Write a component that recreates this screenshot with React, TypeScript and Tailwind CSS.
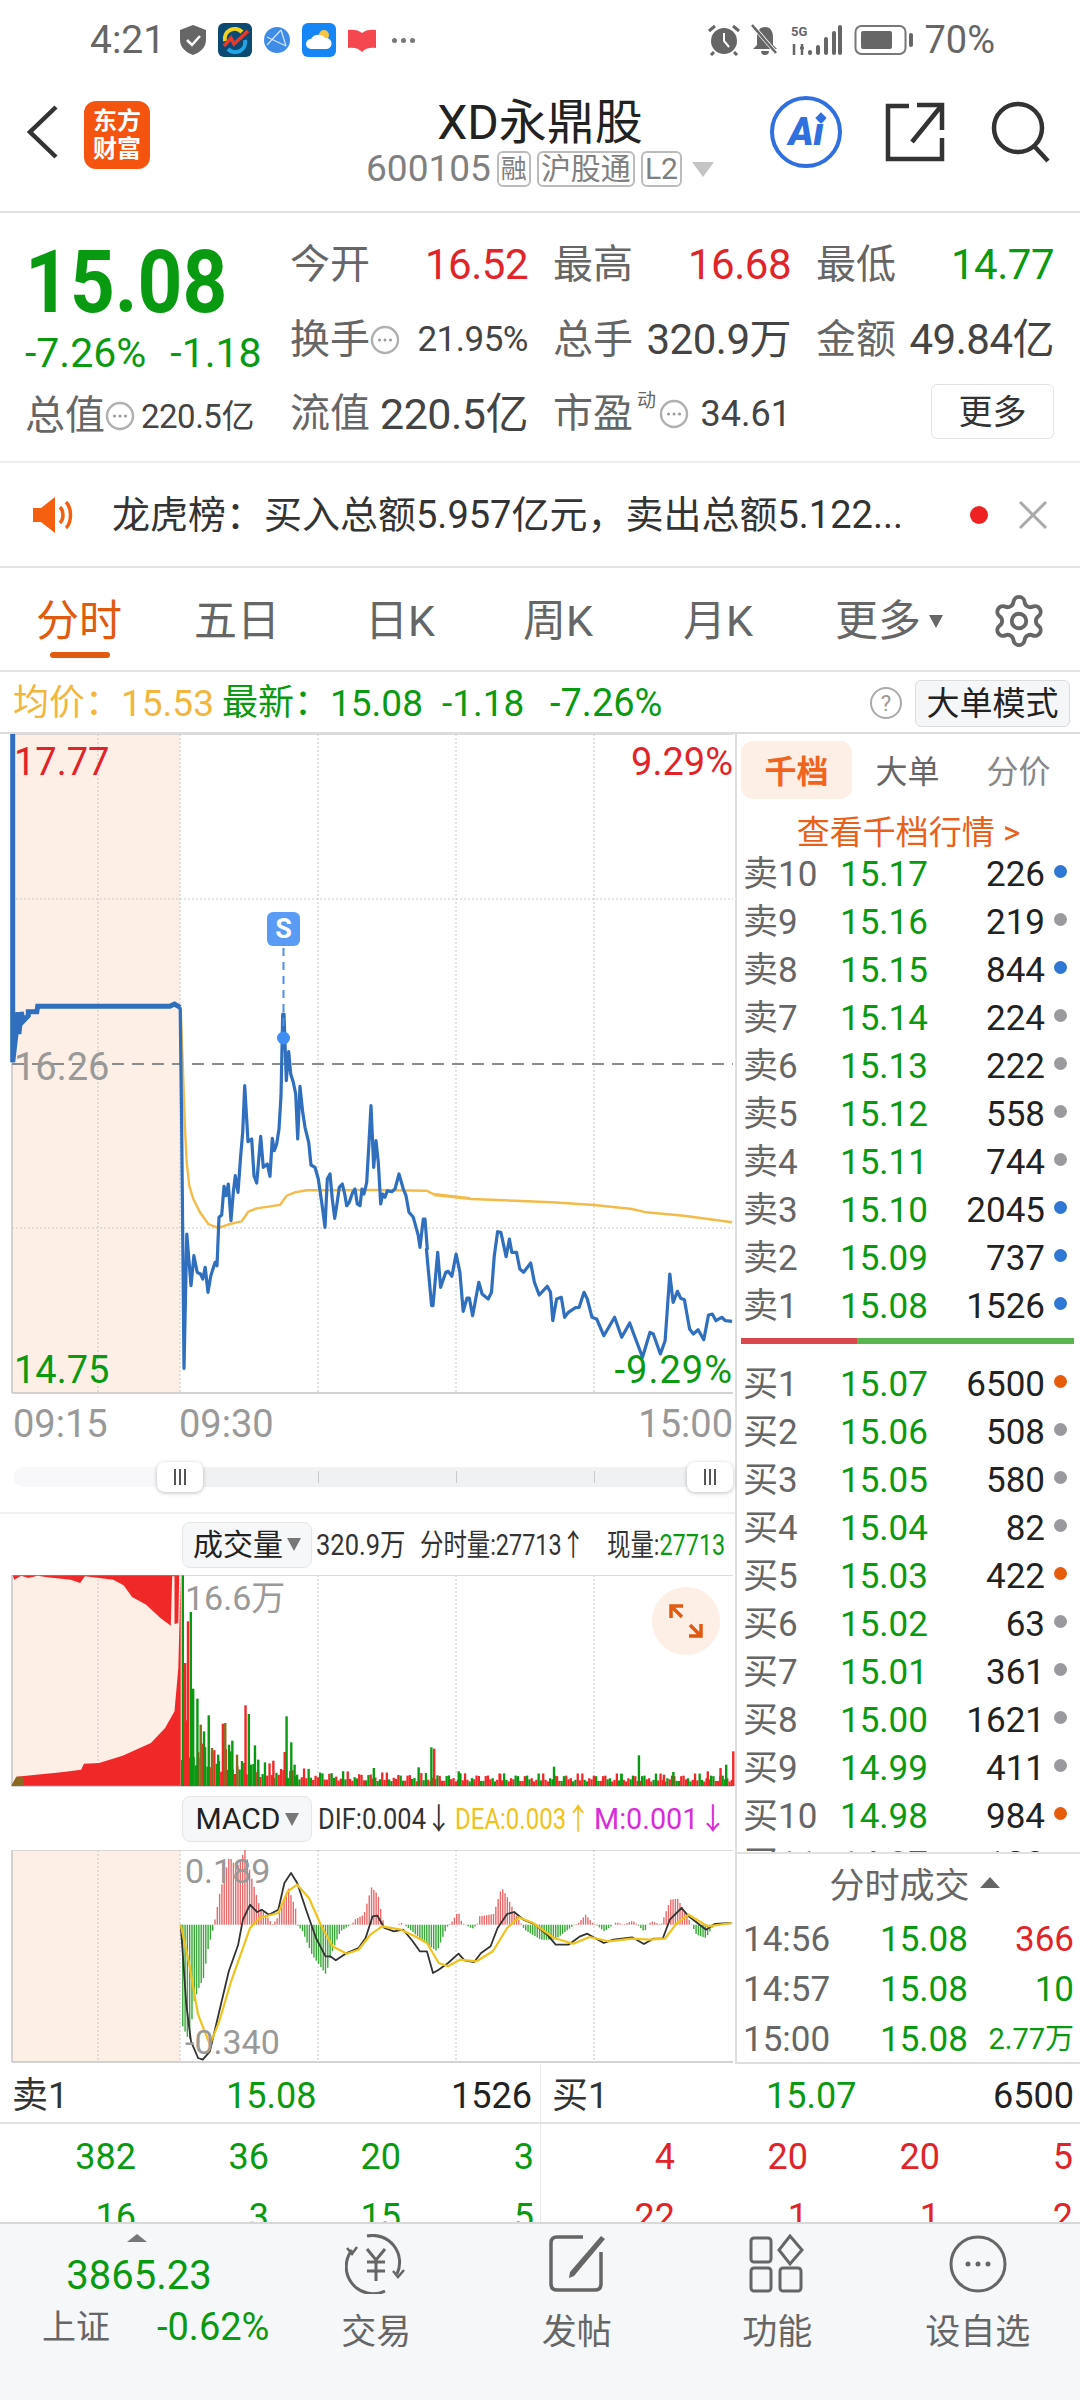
import { Settings } from 'lucide-react';

const GREEN = 'text-[#0a9a12]';
const RED = 'text-[#e0242a]';

type Pt = [number, number];

// points read from the chart, x in 1/2.12 px and y in 1/3 px
const fromWide = (pts: Pt[], top: number): Pt[] => pts.map(([x, y]) => [x / 2.12, top + y / 3]);
const fromFine = (pts: Pt[]): Pt[] => pts.map(([x, y]) => [170 + x / 3, 1030 + y / 3]);
const line = (pts: Pt[]) => pts.map(([x, y]) => `${x.toFixed(1)},${y.toFixed(1)}`).join(' ');

const preMarket = fromWide(
  [[27, 45], [27, 1030], [34, 945], [38, 880], [40, 945], [45, 880], [50, 905], [60, 890], [60, 878], [78, 878], [80, 862], [360, 862], [370, 855], [382, 865]],
  720,
);
const priceA = fromWide(
  [[382, 865], [385, 1200], [390, 1948], [396, 1545], [405, 1700], [411, 1610], [418, 1660], [425, 1665], [430, 1680], [435, 1645], [441, 1720], [447, 1670], [456, 1630], [460, 1640]],
  720,
);
const priceB = fromFine(
  [[143, 660], [147, 565], [155, 558], [162, 472], [168, 500], [175, 465], [183, 575], [190, 490], [196, 440], [204, 490], [212, 380], [218, 310], [224, 170], [234, 338], [245, 330], [252, 440], [260, 462], [272, 322], [280, 415], [292, 405], [300, 442], [307, 328], [313, 365], [320, 345], [327, 300], [333, 200], [338, -45], [342, -45], [349, 155], [356, 68], [362, 135], [370, 160], [377, 195], [383, 330], [390, 172], [398, 250], [405, 295], [416, 340], [423, 408], [435, 415], [445, 450], [455, 520], [465, 595], [472, 450], [480, 435], [487, 510], [494, 568], [500, 530], [508, 475], [517, 465], [524, 495], [530, 530], [538, 520], [548, 490], [555, 480], [562, 525], [570, 530], [576, 480], [582, 495], [590, 460], [597, 340], [603, 230], [611, 415], [618, 335], [625, 400], [632, 525], [638, 495], [645, 505], [652, 485], [665, 488], [675, 480], [687, 435], [700, 480], [708, 500], [717, 550], [730, 565], [745, 620], [750, 655], [760, 570], [765, 570], [772, 660]],
);
const priceC = fromWide(
  [[904, 420], [915, 590], [918, 590], [928, 430], [934, 535], [945, 490], [950, 487], [958, 502], [967, 435], [975, 490], [982, 607], [990, 567], [995, 567], [1002, 620], [1015, 520], [1022, 555], [1035, 570], [1042, 550], [1048, 440], [1055, 368], [1062, 370], [1073, 443], [1080, 390], [1085, 430], [1095, 430], [1102, 480], [1110, 490], [1125, 462], [1133, 520], [1143, 558], [1160, 532], [1167, 550], [1172, 635], [1180, 570], [1190, 565], [1197, 625], [1205, 610], [1220, 596], [1228, 595], [1238, 550], [1245, 570], [1255, 625], [1265, 630], [1280, 680], [1303, 625], [1318, 685], [1335, 642], [1345, 680], [1362, 745], [1378, 670], [1385, 675], [1400, 735], [1410, 695], [1420, 495], [1427, 580], [1436, 547], [1443, 568], [1451, 572], [1462, 660], [1470, 675], [1480, 662], [1492, 692], [1502, 618], [1510, 615], [1518, 635], [1530, 625], [1538, 635], [1552, 637]],
  1110,
);
const avgLine = [
  ...fromFine([[32, -60], [38, 100], [45, 300], [50, 400], [58, 470], [70, 510], [90, 550], [115, 585], [145, 597], [180, 585], [215, 577], [235, 548], [260, 538], [330, 528], [350, 500], [375, 490], [410, 484], [480, 484], [620, 483], [770, 485], [790, 495], [900, 508]]),
  ...fromWide([[920, 258], [1000, 270], [1170, 280], [1260, 288], [1340, 300], [1370, 310], [1450, 320], [1552, 340]], 1110),
];

const volSpikes: [number, number, string][] = [
  [385, 232, 'g'], [390, 495, 'r'], [396, 370, 'r'], [402, 342, 'g'], [407, 572, 'g'], [416, 602, 'g'], [423, 680, 'b'], [430, 700, 'g'], [440, 652, 'g'], [447, 750, 'b'], [460, 770, 'g'], [470, 677, 'r'], [475, 675, 'b'], [483, 740, 'g'], [490, 728, 'g'], [500, 770, 'b'], [518, 622, 'r'], [525, 648, 'g'], [538, 742, 'g'], [545, 785, 'g'], [577, 788, 'r'], [601, 762, 'r'], [605, 655, 'g'], [615, 733, 'g'], [622, 800, 'g'], [790, 810, 'g'], [885, 808, 'g'], [912, 748, 'g'], [918, 752, 'r'], [970, 820, 'g'], [1058, 828, 'r'], [1172, 806, 'g'], [1315, 828, 'g'], [1352, 772, 'g'], [1405, 830, 'r'], [1425, 822, 'g'], [1498, 820, 'r'], [1525, 810, 'r'], [1537, 800, 'g'], [1552, 760, 'r'],
];
const spikeColor: Record<string, string> = { g: '#0a9a12', r: '#f02828', b: '#8a6a1e' };

const volNoise = Array.from({ length: 240 }, (_, i) => {
  const x = 181 + i * 2.3;
  const env = 62 * Math.exp(-(x - 180) / 50) + 13;
  const h = env * (0.35 + (0.65 * ((i * i * 13 + i * 7) % 17)) / 16);
  return { x, h, green: (i * 11) % 5 < 2 };
});

const macdEnv: Pt[] = [[385, 712], [400, 760], [410, 640], [420, 600], [430, 570], [440, 480], [450, 425], [452, 410], [455, 390], [465, 310], [485, 205], [500, 240], [518, 185], [530, 260], [540, 310], [550, 360], [570, 395], [575, 410], [585, 395], [600, 340], [610, 300], [625, 360], [628, 410], [640, 430], [660, 500], [690, 560], [700, 500], [720, 430], [740, 412], [745, 410], [750, 395], [770, 380], [786, 298], [800, 320], [810, 395], [815, 410], [840, 410], [850, 405], [860, 415], [880, 440], [905, 470], [925, 490], [945, 420], [950, 410], [955, 405], [970, 370], [978, 405], [985, 410], [1000, 422], [1010, 410], [1015, 385], [1045, 378], [1062, 298], [1075, 330], [1090, 375], [1105, 410], [1110, 425], [1145, 455], [1175, 455], [1215, 412], [1225, 405], [1240, 380], [1255, 405], [1262, 410], [1280, 430], [1297, 412], [1305, 402], [1320, 410], [1340, 398], [1350, 410], [1365, 432], [1372, 410], [1380, 400], [1400, 410], [1420, 335], [1435, 332], [1450, 370], [1465, 410], [1475, 440], [1495, 450], [1510, 415], [1520, 410]];

const envAt = (x: number) => {
  for (let i = 1; i < macdEnv.length; i++) {
    const [x0, y0] = macdEnv[i - 1];
    const [x1, y1] = macdEnv[i];
    if (x <= x1) return y0 + ((y1 - y0) * (x - x0)) / (x1 - x0);
  }
  return 410;
};
const macdBars = Array.from({ length: 232 }, (_, i) => {
  const X = 386 + i * 4.88;
  return { x: X / 2.12, v: envAt(X) };
});

const dif = fromWide([[383, 410], [395, 650], [405, 760], [420, 810], [430, 815], [445, 790], [465, 670], [485, 550], [505, 470], [515, 395], [530, 350], [545, 372], [555, 365], [570, 380], [590, 365], [603, 285], [617, 255], [630, 285], [650, 370], [670, 450], [690, 505], [700, 505], [712, 517], [735, 495], [760, 480], [775, 450], [790, 385], [800, 383], [815, 420], [835, 430], [855, 425], [875, 460], [890, 490], [905, 490], [918, 555], [930, 545], [950, 525], [972, 497], [985, 517], [1005, 522], [1020, 495], [1040, 475], [1055, 420], [1075, 378], [1090, 372], [1110, 395], [1135, 410], [1160, 440], [1178, 470], [1205, 470], [1230, 445], [1245, 437], [1280, 465], [1300, 455], [1340, 448], [1365, 468], [1385, 452], [1405, 452], [1420, 395], [1445, 360], [1460, 385], [1497, 425], [1515, 408], [1552, 405]], 1790);
const dea = fromWide([[383, 410], [400, 520], [420, 680], [445, 770], [465, 700], [490, 580], [510, 500], [530, 420], [550, 390], [590, 375], [610, 310], [630, 290], [655, 330], [680, 410], [705, 475], [735, 497], [760, 485], [785, 440], [810, 415], [850, 425], [880, 445], [905, 465], [930, 525], [950, 535], [975, 515], [1010, 520], [1045, 490], [1075, 420], [1100, 388], [1130, 405], [1175, 450], [1215, 467], [1250, 447], [1290, 460], [1340, 452], [1375, 455], [1410, 452], [1435, 405], [1460, 380], [1500, 415], [1552, 405]], 1790);

const sells: [string, string, string, string][] = [
  ['卖10', '15.17', '226', 'b'], ['卖9', '15.16', '219', 'g'], ['卖8', '15.15', '844', 'b'], ['卖7', '15.14', '224', 'g'], ['卖6', '15.13', '222', 'g'],
  ['卖5', '15.12', '558', 'g'], ['卖4', '15.11', '744', 'g'], ['卖3', '15.10', '2045', 'b'], ['卖2', '15.09', '737', 'b'], ['卖1', '15.08', '1526', 'b'],
];
const buys: [string, string, string, string][] = [
  ['买1', '15.07', '6500', 'o'], ['买2', '15.06', '508', 'g'], ['买3', '15.05', '580', 'g'], ['买4', '15.04', '82', 'g'], ['买5', '15.03', '422', 'o'],
  ['买6', '15.02', '63', 'g'], ['买7', '15.01', '361', 'g'], ['买8', '15.00', '1621', 'g'], ['买9', '14.99', '411', 'g'], ['买10', '14.98', '984', 'o'],
];

function Dots() {
  return (
    <svg width="30" height="30" viewBox="0 0 30 30" className="shrink-0">
      <circle cx="15" cy="15" r="13" fill="none" stroke="#b0b0b0" strokeWidth="2.4" />
      <circle cx="9.5" cy="15" r="1.5" fill="#999" />
      <circle cx="15" cy="15" r="1.5" fill="#999" />
      <circle cx="20.5" cy="15" r="1.5" fill="#999" />
    </svg>
  );
}

function BookRow({ label, price, vol, dot }: { label: string; price: string; vol: string; dot: string }) {
  const dotColor = dot === 'b' ? 'bg-[#2f78d6]' : dot === 'o' ? 'bg-[#e85c0d]' : 'bg-[#9a9a9e]';
  return (
    <div className="flex h-[48px] shrink-0 items-center pt-[5px] text-[35px] leading-none">
      <span className="w-[99px] pl-[2px] text-[#666] whitespace-nowrap">{label}</span>
      <span className={`w-[90px] ${GREEN}`}>{price}</span>
      <span className="w-[115px] text-right text-[#222]">{vol}</span>
      <span className={`ml-[9px] mb-[6px] h-[13px] w-[13px] rounded-full ${dotColor}`} />
    </div>
  );
}

function Stat({ label, value }: { label: React.ReactNode; value: React.ReactNode }) {
  return (
    <div className="flex w-[238px] items-center justify-between whitespace-nowrap">
      <div className="flex items-center text-[40px] leading-none text-[#666]">{label}</div>
      {value}
    </div>
  );
}

function Grid({ top, h }: { top: number; h: number }) {
  return (
    <>
      <rect x="12" y={top} width="168" height={h} fill="#fdeee6" />
      {[98, 180, 318, 456, 594].map((x) => (
        <line key={x} x1={x} x2={x} y1={top} y2={top + h} stroke="#c8c8c8" strokeWidth="1" strokeDasharray="2 2" />
      ))}
      <line x1="12" x2="12" y1={top} y2={top + h} stroke="#c4c4c4" strokeWidth="1.5" />
      <line x1="12" x2="733" y1={top} y2={top} stroke="#d0d0d0" strokeWidth="1.5" />
      <line x1="12" x2="733" y1={top + h} y2={top + h} stroke="#c4c4c4" strokeWidth="1.5" />
    </>
  );
}

function Handle({ left }: { left: string }) {
  return (
    <div className={`absolute top-[-5px] flex h-[30px] w-[46px] items-center justify-center gap-[3px] rounded-lg bg-white shadow-[0_1px_4px_rgba(0,0,0,0.25)] ${left}`}>
      <span className="h-[16px] w-[2px] bg-[#555]" />
      <span className="h-[16px] w-[2px] bg-[#555]" />
      <span className="h-[16px] w-[2px] bg-[#555]" />
    </div>
  );
}

function Caret() {
  return <span className="ml-[4px] h-0 w-0 border-x-[7px] border-t-[13px] border-x-transparent border-t-[#777]" />;
}

export default function App() {
  return (
    <div className="flex h-[2400px] w-[1080px] flex-col overflow-hidden bg-white font-[Roboto,'Noto_Sans_CJK_SC',sans-serif]">
      {/* status bar */}
      <div className="flex h-[75px] shrink-0 items-center justify-between pl-[90px] pr-[85px] pt-[5px] text-[#666]">
        <div className="flex items-center">
          <span className="w-[89px] text-[39px] leading-none">4:21</span>
          <svg width="28" height="32" viewBox="0 0 28 32" className="mr-[11px]">
            <path d="M14 1 L27 6 V16 C27 24 20 29 14 31 C8 29 1 24 1 16 V6 Z" fill="#666" />
            <path d="M8 16 L13 21 L21 12" fill="none" stroke="#fff" strokeWidth="2.5" />
          </svg>
          <svg width="34" height="34" viewBox="0 0 34 34" className="mr-[12px]">
            <rect width="34" height="34" rx="6" fill="#0d4a73" />
            <path d="M7 18 A10 10 0 0 1 24 9" fill="none" stroke="#f4d31e" strokeWidth="4" />
            <path d="M27 17 A10 10 0 0 1 10 26" fill="none" stroke="#22a6e8" strokeWidth="4" />
            <path d="M6 23 L13 15 L16 21 L30 8" fill="none" stroke="#e8392a" strokeWidth="3.5" />
          </svg>
          <svg width="26" height="26" viewBox="0 0 26 26" className="mr-[12px]">
            <circle cx="13" cy="13" r="13" fill="#3f8be8" />
            <path d="M3 18 L17 3 M3 10 L22 19 M17 3 L22 19" fill="none" stroke="#d6e7fc" strokeWidth="1.2" />
          </svg>
          <svg width="34" height="34" viewBox="0 0 34 34" className="mr-[11px]">
            <rect width="34" height="34" rx="6" fill="#1685f5" />
            <circle cx="22" cy="12" r="5" fill="#f6c344" />
            <path d="M9 26 a5 5 0 0 1 0 -10 a8 7 0 0 1 14 -1 a5.5 5.5 0 0 1 2 11 Z" fill="#fff" />
          </svg>
          <svg width="30" height="24" viewBox="0 0 30 24" className="mr-[15px]">
            <path d="M1 2 C6 1 12 2 15 5 C18 2 24 1 29 2 V20 C24 19 18 20 15 24 C12 20 6 19 1 20 Z" fill="#f4474f" />
          </svg>
          <span className="flex gap-[4px]">
            <span className="h-[5px] w-[5px] rounded-full bg-[#777]" />
            <span className="h-[5px] w-[5px] rounded-full bg-[#777]" />
            <span className="h-[5px] w-[5px] rounded-full bg-[#777]" />
          </span>
        </div>
        <div className="flex items-center">
          <svg width="34" height="32" viewBox="0 0 34 32" className="mr-[10px]">
            <circle cx="17" cy="17" r="13" fill="#666" />
            <path d="M17 9 V17 L22 23" fill="none" stroke="#fff" strokeWidth="2" />
            <path d="M2 7 L8 2 M32 7 L26 2 M7 28 L4 31 M27 28 L30 31" stroke="#666" strokeWidth="3" />
          </svg>
          <svg width="28" height="32" viewBox="0 0 28 32" className="mr-[12px]">
            <path d="M14 3 C8 3 6 8 6 13 V21 L2 25 H26 L22 21 V13 C22 8 20 3 14 3 Z M10 27 H18 C18 30 16 31 14 31 C12 31 10 30 10 27 Z" fill="#666" />
            <path d="M2 2 L26 30" stroke="#fff" strokeWidth="4" />
            <path d="M1 1 L25 29" stroke="#666" strokeWidth="2.5" />
          </svg>
          <svg width="52" height="32" viewBox="0 0 52 32" className="mr-[11px]">
            <text x="0" y="12" fontSize="13" fontWeight="700" fill="#666">5G</text>
            <path d="M3 20 V31 M11 20 V31 M9 24 L13 24" stroke="#666" strokeWidth="2.5" />
            <rect x="17" y="26" width="4" height="5" rx="2" fill="#666" />
            <rect x="25" y="21" width="4" height="10" rx="2" fill="#666" />
            <rect x="33" y="13" width="4" height="18" rx="2" fill="#666" />
            <rect x="41" y="7" width="4" height="24" rx="2" fill="#666" />
            <rect x="47" y="1" width="4" height="30" rx="2" fill="#666" />
          </svg>
          <svg width="60" height="32" viewBox="0 0 60 32" className="mr-[10px]">
            <rect x="1.5" y="2" width="50" height="28" rx="6" fill="none" stroke="#777" strokeWidth="2" />
            <rect x="7" y="7" width="31" height="18" rx="2" fill="#666" />
            <rect x="55" y="9" width="4" height="14" rx="2" fill="#666" />
          </svg>
          <span className="text-[38px] leading-none">70%</span>
        </div>
      </div>

      {/* header */}
      <div className="relative flex h-[138px] shrink-0 items-center border-b-2 border-[#e0e0e0]">
        <svg width="34" height="56" viewBox="0 0 34 56" className="ml-[26px] mb-[22px]">
          <path d="M30 3 L4 28 L30 53" fill="none" stroke="#333" strokeWidth="4.5" />
        </svg>
        <div className="ml-[24px] mb-[16px] flex h-[68px] w-[66px] items-center justify-center rounded-xl bg-[#f4540f] text-center text-[24px] font-bold leading-[28px] text-white">
          东方
          <br />
          财富
        </div>
        <div className="absolute left-[330px] top-0 flex w-[420px] flex-col items-center">
          <span className="mt-[20px] text-[48px] leading-[56px] text-[#222]">XD永鼎股</span>
          <div className="mt-[-2px] flex items-center gap-[6px] text-[#808080]">
            <span className="text-[37px] leading-[40px]">600105</span>
            <span className="rounded-md border-2 border-[#bbb] px-[2px] text-[26px] leading-[32px]">融</span>
            <span className="rounded-md border-2 border-[#bbb] px-[2px] text-[30px] leading-[32px]">沪股通</span>
            <span className="rounded-md border-2 border-[#bbb] px-[2px] text-[30px] leading-[32px]">L2</span>
            <span className="ml-[4px] h-0 w-0 border-x-[11px] border-t-[15px] border-x-transparent border-t-[#c4c4c4]" />
          </div>
        </div>
        <div className="ml-auto mb-[22px] flex items-center pr-[29px]">
          <div className="relative flex h-[72px] w-[72px] items-center justify-center rounded-full border-[4px] border-[#2f6fe0] text-[38px] font-black italic leading-none text-[#2f6fe0]">
            Ai
            <span className="absolute right-[13px] top-[14px] h-[8px] w-[8px] rotate-45 bg-[#2f6fe0]" />
          </div>
          <svg width="60" height="60" viewBox="0 0 60 60" className="ml-[43px]">
            <path d="M24 4 H3 V57 H57 V36 M57 28 V3 H32 M57 3 L27 40" fill="none" stroke="#333" strokeWidth="4.5" />
          </svg>
          <svg width="60" height="62" viewBox="0 0 60 62" className="ml-[46px]">
            <circle cx="27" cy="27" r="24" fill="none" stroke="#333" strokeWidth="4.5" />
            <path d="M44 46 L57 60" stroke="#333" strokeWidth="4.5" />
          </svg>
        </div>
      </div>

      {/* quote */}
      <div className="flex h-[250px] shrink-0 border-b-2 border-[#eeeeee]">
        <div className="w-[290px] shrink-0 pl-[25px]">
          <div className={`mt-[25px] origin-left scale-x-[0.89] text-[88px] font-bold leading-[88px] ${GREEN}`}>15.08</div>
          <div className={`mt-[3px] flex items-center gap-[24px] text-[41px] leading-[48px] ${GREEN}`}>
            <span>-7.26%</span>
            <span>-1.18</span>
          </div>
          <div className="mt-[15px] flex items-center">
            <span className="text-[40px] leading-[48px] text-[#666]">总值</span>
            <Dots />
            <span className="ml-[6px] whitespace-nowrap text-[33px] tracking-[-0.5px] leading-none text-[#444]">220.5亿</span>
          </div>
        </div>
        <div className="flex flex-col">
          <div className="mt-[28px] flex gap-[25px]">
            <Stat label="今开" value={<span className={`text-[42px] tracking-[-0.5px] leading-[48px] ${RED}`}>16.52</span>} />
            <Stat label="最高" value={<span className={`text-[42px] tracking-[-0.5px] leading-[48px] ${RED}`}>16.68</span>} />
            <Stat label="最低" value={<span className={`text-[42px] tracking-[-0.5px] leading-[48px] ${GREEN}`}>14.77</span>} />
          </div>
          <div className="mt-[27px] flex gap-[25px] text-[#444]">
            <Stat label={<>换手<Dots /></>} value={<span className="text-[35px] tracking-[-0.5px] leading-[48px]">21.95%</span>} />
            <Stat label="总手" value={<span className="text-[42px] tracking-[-0.5px] leading-[48px]">320.9万</span>} />
            <Stat label="金额" value={<span className="text-[42px] tracking-[-0.5px] leading-[48px]">49.84亿</span>} />
          </div>
          <div className="mt-[24px] flex gap-[25px] text-[#444]">
            <Stat label="流值" value={<span className="text-[43px] tracking-[-0.5px] leading-[48px]">220.5亿</span>} />
            <Stat
              label={
                <>
                  市盈
                  <span className="mb-[26px] ml-[4px] mr-[3px] text-[19px] leading-none">动</span>
                  <Dots />
                </>
              }
              value={<span className="text-[36px] leading-[48px]">34.61</span>}
            />
            <div className="flex w-[238px] justify-end">
              <div className="mt-[-4px] flex h-[55px] w-[123px] items-center justify-center rounded-md border border-[#e3e3e3] text-[34px] leading-none text-[#333]">
                更多
              </div>
            </div>
          </div>
        </div>
      </div>

      {/* notice */}
      <div className="flex h-[105px] shrink-0 items-center border-b-2 border-[#e4e4e4]">
        <svg width="46" height="38" viewBox="0 0 46 38" className="ml-[33px] mr-[33px]">
          <path d="M0 12 H8 L22 1 V37 L8 26 H0 Z" fill="#f4600f" />
          <path d="M27 11 C31 15 31 23 27 27 M33 6 C39 12 39 26 33 32" fill="none" stroke="#f4600f" strokeWidth="3.5" />
        </svg>
        <span className="w-[830px] whitespace-nowrap text-[38px] leading-none text-[#333]">龙虎榜：买入总额5.957亿元，卖出总额5.122...</span>
        <span className="ml-[28px] h-[18px] w-[18px] rounded-full bg-[#ee2222]" />
        <svg width="30" height="30" viewBox="0 0 30 30" className="ml-[30px]">
          <path d="M2 2 L28 28 M28 2 L2 28" stroke="#aaa" strokeWidth="3" />
        </svg>
      </div>

      {/* tabs */}
      <div className="flex h-[104px] shrink-0 items-center border-b-2 border-[#e4e4e4] pt-[4px] text-[43px] leading-none text-[#666]">
        <div className="relative flex w-[158px] justify-center text-[#e05a10]">
          分时
          <span className="absolute left-[50px] top-[52px] h-[6px] w-[60px] rounded-full bg-[#e05a10]" />
        </div>
        <div className="flex w-[158px] justify-center">五日</div>
        <div className="flex w-[168px] justify-center">日K</div>
        <div className="flex w-[148px] justify-center">周K</div>
        <div className="flex w-[172px] justify-center">月K</div>
        <div className="flex w-[170px] items-center justify-center">
          更多
          <span className="ml-[8px] h-0 w-0 border-x-[7px] border-t-[13px] border-x-transparent border-t-[#666]" />
        </div>
        <Settings size={58} strokeWidth={1.6} color="#666" className="ml-[16px]" />
      </div>

      {/* price summary */}
      <div className="flex h-[62px] shrink-0 items-center whitespace-nowrap border-b-2 border-[#dcdcdc] pl-[13px] pt-[2px] text-[37px] leading-none">
        <span className="w-[108px] shrink-0 text-[36px] text-[#f3b63c]">均价：</span>
        <span className="w-[101px] shrink-0 text-[#f3b63c]">15.53</span>
        <span className={`w-[108px] shrink-0 text-[36px] ${GREEN}`}>最新：</span>
        <span className={`w-[112px] shrink-0 ${GREEN}`}>15.08</span>
        <span className={`w-[108px] shrink-0 ${GREEN}`}>-1.18</span>
        <span className={`text-[38px] ${GREEN}`}>-7.26%</span>
        <svg width="34" height="34" viewBox="0 0 34 34" className="ml-auto">
          <circle cx="17" cy="17" r="15" fill="none" stroke="#aaa" strokeWidth="2" />
          <text x="17" y="25" textAnchor="middle" fontSize="22" fill="#999">?</text>
        </svg>
        <div className="ml-[12px] mr-[10px] flex h-[47px] w-[155px] items-center justify-center rounded-md border border-[#dcdcdc] bg-[#f5f6f8] text-[33px] text-[#222]">
          大单模式
        </div>
      </div>

      <div className="flex h-[1330px] shrink-0">
        {/* left charts */}
        <div className="w-[735px] shrink-0">
          <div className="relative h-[660px]">
            <svg width="735" height="660" viewBox="0 735 735 660" className="block">
              <Grid top={735} h={659} />
              <line x1="12" x2="733" y1="900" y2="900" stroke="#c8c8c8" strokeDasharray="2 2" />
              <line x1="12" x2="733" y1="1229" y2="1229" stroke="#c8c8c8" strokeDasharray="2 2" />
              <line x1="12" x2="733" y1="1065" y2="1065" stroke="#8c8c8c" strokeWidth="2" strokeDasharray="12 8" />
              <polyline points={line(preMarket)} fill="none" stroke="#2f6fbd" strokeWidth="5" />
              <polyline points={line(avgLine)} fill="none" stroke="#f2bb4a" strokeWidth="2.4" />
              <polyline points={line([...priceA, ...priceB, ...priceC])} fill="none" stroke="#2f6fbd" strokeWidth="3.2" strokeLinejoin="round" />
              <line x1="283.5" x2="283.5" y1="949" y2="1032" stroke="#4a90e8" strokeWidth="2" strokeDasharray="8 6" />
              <circle cx="283.5" cy="1039" r="6.5" fill="#3f8ef5" />
              <rect x="267" y="913" width="33" height="34" rx="6" fill="#5a9cf5" />
              <text x="283.5" y="939" textAnchor="middle" fontSize="27" fontWeight="700" fill="#fff">S</text>
            </svg>
            <span className={`absolute left-[14px] top-[6px] text-[38px] leading-[44px] ${RED}`}>17.77</span>
            <span className={`absolute right-[2px] top-[6px] text-[38px] leading-[44px] ${RED}`}>9.29%</span>
            <span className="absolute left-[14px] top-[311px] text-[38px] leading-[44px] text-[#999]">16.26</span>
            <span className={`absolute left-[14px] top-[614px] text-[38px] leading-[44px] ${GREEN}`}>14.75</span>
            <span className={`absolute right-[2px] top-[614px] text-[38px] tracking-[1px] leading-[44px] ${GREEN}`}>-9.29%</span>
          </div>

          <div className="flex h-[60px] items-center justify-between pl-[13px] pr-[2px] text-[38px] leading-none text-[#999]">
            <span className="w-[166px]">09:15</span>
            <span className="mr-auto">09:30</span>
            <span>15:00</span>
          </div>

          <div className="h-[60px] border-b-2 border-[#f0f0f0] pl-[14px] pr-[2px] pt-[13px]">
            <div className="relative flex h-[20px] rounded-full bg-[#f0f1f3]">
              <div className="w-[150px] rounded-l-full bg-[#f8f8fa]" />
              <span className="absolute left-[304px] top-[4px] h-[12px] w-px bg-[#c8c8c8]" />
              <span className="absolute left-[442px] top-[4px] h-[12px] w-px bg-[#c8c8c8]" />
              <span className="absolute left-[580px] top-[4px] h-[12px] w-px bg-[#c8c8c8]" />
              <Handle left="left-[143px]" />
              <Handle left="right-0" />
            </div>
          </div>

          <div className="flex h-[61px] items-center whitespace-nowrap pl-[182px] text-[30px] leading-none text-[#333]">
            <div className="mr-[4px] flex h-[46px] w-[130px] items-center justify-center rounded-lg border border-[#e6e6e6] bg-[#f6f7f9] text-[#222]">
              成交量
              <Caret />
            </div>
            <span className="w-[104px] origin-left scale-x-[0.85]">320.9万</span>
            <span className="w-[187px] origin-left scale-x-[0.78]">分时量:27713↑</span>
            <span className="w-[116px] origin-left scale-x-[0.78]">
              现量:<span className={GREEN}>27713</span>
            </span>
          </div>

          <div className="relative h-[213px]">
            <svg width="735" height="213" viewBox="0 1577 735 213" className="block">
              <Grid top={1577} h={211} />
              <polygon
                points={line(fromWide([[24, 863], [35, 836], [130, 823], [172, 815], [178, 797], [210, 795], [260, 773], [320, 735], [350, 690], [370, 640], [378, 510], [383, 232], [383, 863]], 1500))}
                fill="#f02828"
              />
              <polygon points={line(fromWide([[24, 863], [35, 836], [50, 836], [50, 863]], 1500))} fill="#8a6a1e" />
              <polygon
                points={line(fromWide([[27, 232], [30, 245], [45, 233], [60, 240], [80, 233], [100, 238], [150, 245], [170, 255], [180, 235], [240, 245], [262, 262], [280, 297], [310, 320], [340, 360], [362, 383], [365, 235], [370, 235], [370, 378], [378, 375], [380, 232]], 1500))}
                fill="#f02828"
              />
              {volNoise.map((b) => (
                <rect key={b.x} x={b.x} y={1788 - b.h} width="2.3" height={b.h} fill={b.green ? '#0a9a12' : '#f02828'} />
              ))}
              {volSpikes.map(([X, v, c]) => (
                <rect key={X} x={X / 2.12} y={1500 + v / 3} width="2.4" height={1788 - (1500 + v / 3)} fill={spikeColor[c]} />
              ))}
            </svg>
            <span className="absolute left-[185px] top-[3px] text-[34px] leading-[40px] text-[#999]">16.6万</span>
            <div className="absolute left-[652px] top-[12px] flex h-[68px] w-[68px] items-center justify-center rounded-full bg-[#fdeee6]">
              <svg width="36" height="36" viewBox="0 0 36 36">
                <path d="M3 15 V3 H15 M3 3 L14 14 M33 21 V33 H21 M33 33 L22 22" fill="none" stroke="#e05a10" strokeWidth="3.5" />
              </svg>
            </div>
          </div>

          <div className="flex h-[62px] items-center whitespace-nowrap pl-[182px] text-[30px] leading-none">
            <div className="mr-[6px] flex h-[46px] w-[130px] items-center justify-center rounded-lg border border-[#e6e6e6] bg-[#f6f7f9] text-[#222]">
              MACD
              <Caret />
            </div>
            <span className="w-[137px] origin-left scale-x-[0.85] text-[#333]">DIF:0.004↓</span>
            <span className="w-[139px] origin-left scale-x-[0.8] text-[#efc31c]">DEA:0.003↑</span>
            <span className="origin-left scale-x-[0.96] text-[#d92cd9]">M:0.001↓</span>
          </div>

          <div className="relative h-[213px]">
            <svg width="735" height="213" viewBox="0 1852 735 213" className="block">
              <Grid top={1852} h={212} />
              {macdBars.map((b) => {
                const y = 1790 + b.v / 3;
                const up = b.v < 410;
                return (
                  <rect
                    key={b.x}
                    x={b.x}
                    y={up ? y : 1926.7}
                    width="1.4"
                    height={Math.abs(y - 1926.7)}
                    fill={up ? '#e86a6a' : '#3aa83a'}
                  />
                );
              })}
              <polyline points={line(dif)} fill="none" stroke="#333" strokeWidth="1.8" strokeLinejoin="round" />
              <polyline points={line(dea)} fill="none" stroke="#efc31c" strokeWidth="2.2" strokeLinejoin="round" />
            </svg>
            <span className="absolute left-[185px] top-[1px] text-[34px] leading-[40px] text-[#999]">0.189</span>
            <span className="absolute left-[185px] top-[172px] text-[34px] leading-[40px] text-[#999]">-0.340</span>
          </div>
        </div>

        {/* order book */}
        <div className="flex w-[345px] shrink-0 flex-col overflow-hidden border-l-2 border-b-2 border-[#dedede] pl-[4px]">
          <div className="mt-[7px] flex h-[58px] shrink-0 items-center text-[32px] leading-none text-[#666]">
            <div className="flex h-[58px] w-[111px] items-center justify-center rounded-xl bg-[#fdeee6] pt-[4px] font-bold text-[#f0641e]">千档</div>
            <div className="flex w-[111px] justify-center pt-[4px]">大单</div>
            <div className="flex w-[111px] justify-center pt-[4px] text-[#888]">分价</div>
          </div>
          <div className="flex h-[49px] shrink-0 items-center justify-center pr-[4px] pt-[18px] text-[33px] leading-none text-[#ea5f1a]">查看千档行情 &gt;</div>
          {sells.map(([l, p, v, d]) => (
            <BookRow key={l} label={l} price={p} vol={v} dot={d} />
          ))}
          <div className="mt-[10px] mb-[14px] flex h-[6px] w-[333px] shrink-0">
            <div className="w-[116px] bg-[#d9484c]" />
            <div className="flex-1 bg-[#5cb450]" />
          </div>
          {buys.map(([l, p, v, d]) => (
            <BookRow key={l} label={l} price={p} vol={v} dot={d} />
          ))}
          <div className="h-[14px] shrink-0 overflow-hidden">
            <BookRow label="买11" price="14.97" vol="128" dot="g" />
          </div>
          <div className="-ml-[4px] flex h-[60px] shrink-0 items-center justify-center border-t-2 border-[#e2e2e2] pl-[12px] pt-[6px] text-[35px] leading-none text-[#666]">
            分时成交
            <span className="ml-[10px] mb-[8px] h-0 w-0 border-x-[10px] border-b-[11px] border-x-transparent border-b-[#666]" />
          </div>
          <div className="flex h-[50px] shrink-0 items-center pt-[5px] text-[35px] leading-none">
            <span className="w-[139px] pl-[2px] text-[#666]">14:56</span>
            <span className={`w-[90px] ${GREEN}`}>15.08</span>
            <span className={`w-[104px] text-right ${RED}`}>366</span>
          </div>
          <div className="flex h-[50px] shrink-0 items-center pt-[5px] text-[35px] leading-none">
            <span className="w-[139px] pl-[2px] text-[#666]">14:57</span>
            <span className={`w-[90px] ${GREEN}`}>15.08</span>
            <span className={`w-[104px] text-right ${GREEN}`}>10</span>
          </div>
          <div className="flex h-[50px] shrink-0 items-center pt-[5px] text-[35px] leading-none">
            <span className="w-[139px] pl-[2px] text-[#666]">15:00</span>
            <span className={`w-[90px] ${GREEN}`}>15.08</span>
            <span className={`w-[104px] text-right text-[29px] ${GREEN}`}>2.77万</span>
          </div>
        </div>
      </div>

      {/* trades summary */}
      <div className="h-[160px] shrink-0 overflow-hidden border-b-2 border-[#d8d8d8]">
        <div className="flex h-[60px] items-center border-b-2 border-[#e2e2e2] text-[36px] leading-none">
          <div className="flex h-full w-[541px] items-center border-r border-[#e6e6e6] pl-[12px] pr-[8px] pt-[6px]">
            <span className="w-[214px] text-[#333]">卖1</span>
            <span className={GREEN}>15.08</span>
            <span className="ml-auto text-[#222]">1526</span>
          </div>
          <div className="flex h-full flex-1 items-center pl-[11px] pr-[6px] pt-[6px]">
            <span className="w-[214px] text-[#333]">买1</span>
            <span className={GREEN}>15.07</span>
            <span className="ml-auto text-[#222]">6500</span>
          </div>
        </div>
        <div className="flex text-[36px] leading-[60px]">
          <div className={`grid w-[541px] grid-cols-[136px_133px_132px_133px] border-r border-[#e6e6e6] pt-[3px] text-right ${GREEN}`}>
            {['382', '36', '20', '3', '16', '3', '15', '5'].map((n, i) => (
              <span key={i}>{n}</span>
            ))}
          </div>
          <div className={`grid flex-1 grid-cols-[134px_133px_132px_133px] pt-[3px] text-right ${RED}`}>
            {['4', '20', '20', '5', '22', '1', '1', '2'].map((n, i) => (
              <span key={i}>{n}</span>
            ))}
          </div>
        </div>
      </div>

      {/* bottom bar */}
      <div className="flex flex-1 bg-[#f5f7f9] pt-[10px] text-[#666]">
        <div className="relative w-[276px] shrink-0">
          <span className="absolute left-[127px] top-[0px] h-0 w-0 border-x-[10px] border-b-[8px] border-x-transparent border-b-[#777]" />
          <div className={`mt-[20px] w-[278px] text-center text-[40px] leading-[44px] ${GREEN}`}>3865.23</div>
          <div className="mt-[10px] flex items-center pl-[42px] leading-none">
            <span className="w-[115px] text-[34px]">上证</span>
            <span className={`text-[38px] ${GREEN}`}>-0.62%</span>
          </div>
        </div>
        <div className="flex flex-1 pr-[2px] text-[35px] leading-none">
          <div className="flex flex-1 flex-col items-center">
            <svg width="62" height="60" viewBox="0 0 62 60">
              <path d="M22 2 A27 27 0 0 1 52 40 M40 57 A27 27 0 0 1 7 16" fill="none" stroke="#666" strokeWidth="3" />
              <path d="M2 14 L7 20 L12 13 M48 37 L53 43 L59 36" fill="none" stroke="#666" strokeWidth="2.5" />
              <path d="M22 15 L31 26 L40 15 M22 28 H40 M22 37 H40 M31 26 V47" fill="none" stroke="#666" strokeWidth="3" />
            </svg>
            <span className="mt-[21px]">交易</span>
          </div>
          <div className="flex flex-1 flex-col items-center">
            <svg width="60" height="60" viewBox="0 0 60 60">
              <path d="M36 3 H10 Q4 3 4 9 V50 Q4 56 10 56 H48 Q54 56 54 50 V18" fill="none" stroke="#666" strokeWidth="3.5" />
              <path d="M54 2 L58 5 L27 42 L22 44 L23 38 Z" fill="#666" />
            </svg>
            <span className="mt-[21px]">发帖</span>
          </div>
          <div className="flex flex-1 flex-col items-center">
            <svg width="56" height="60" viewBox="0 0 56 60">
              <rect x="2" y="4" width="20" height="24" rx="3" fill="none" stroke="#666" strokeWidth="3" />
              <rect x="2" y="34" width="20" height="23" rx="3" fill="none" stroke="#666" strokeWidth="3" />
              <rect x="31" y="34" width="21" height="23" rx="3" fill="none" stroke="#666" strokeWidth="3" />
              <path d="M41 2 L53 16 L41 30 L30 16 Z" fill="none" stroke="#666" strokeWidth="3" />
            </svg>
            <span className="mt-[21px]">功能</span>
          </div>
          <div className="flex flex-1 flex-col items-center">
            <svg width="60" height="60" viewBox="0 0 60 60">
              <ellipse cx="30" cy="30" rx="27" ry="27" fill="none" stroke="#666" strokeWidth="3" />
              <circle cx="20" cy="30" r="2.5" fill="#666" />
              <circle cx="30" cy="30" r="2.5" fill="#666" />
              <circle cx="40" cy="30" r="2.5" fill="#666" />
            </svg>
            <span className="mt-[21px]">设自选</span>
          </div>
        </div>
      </div>
    </div>
  );
}
